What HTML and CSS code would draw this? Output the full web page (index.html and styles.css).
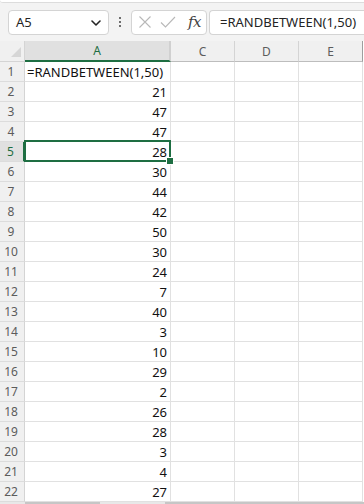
FILE: index.html
```html
<!DOCTYPE html>
<html>
<head>
<meta charset="utf-8">
<link rel="stylesheet" href="styles.css">
</head>
<body>
<div class="app">
  <div class="ribbon-edge"></div>
  <div class="fbar">
    <div class="namebox">
      <span class="nb-text">A5</span>
      <svg class="chev" width="10" height="6" viewBox="0 0 10 6"><path d="M1 1 L5 5 L9 1" fill="none" stroke="#242424" stroke-width="1.6" stroke-linecap="round" stroke-linejoin="round"/></svg>
    </div>
    <div class="dots"><span></span><span></span><span></span></div>
    <div class="fxbox">
      <svg class="ic" width="14" height="14" viewBox="0 0 14 14"><path d="M1.5 1.5 L12.5 12.5 M12.5 1.5 L1.5 12.5" stroke="#b8b8b8" stroke-width="1.1" fill="none"/></svg>
      <svg class="ic" width="16" height="14" viewBox="0 0 16 14"><path d="M1 7.5 L5.5 12 L15 2" stroke="#b8b8b8" stroke-width="1.1" fill="none"/></svg>
      <span class="fx">fx</span>
    </div>
    <div class="finput">=RANDBETWEEN(1,50)</div>
  </div>
  <div class="grid">
    <div class="corner"><svg width="10" height="10" viewBox="0 0 10 10"><path d="M10 0 L10 10 L0 10 Z" fill="#d6d6d6"/></svg></div>
    <div class="ch sel">A</div>
    <div class="ch hidden-left">C</div>
    <div class="ch">D</div>
    <div class="ch last">E</div>

    <div class="rh">1</div><div class="c txt">=RANDBETWEEN(1,50)</div><div class="c hl"></div><div class="c"></div><div class="c last"></div>
    <div class="rh">2</div><div class="c">21</div><div class="c hl"></div><div class="c"></div><div class="c last"></div>
    <div class="rh">3</div><div class="c">47</div><div class="c hl"></div><div class="c"></div><div class="c last"></div>
    <div class="rh">4</div><div class="c">47</div><div class="c hl"></div><div class="c"></div><div class="c last"></div>
    <div class="rh rsel">5</div><div class="c active">28</div><div class="c hl"></div><div class="c"></div><div class="c last"></div>
    <div class="rh">6</div><div class="c">30</div><div class="c hl"></div><div class="c"></div><div class="c last"></div>
    <div class="rh">7</div><div class="c">44</div><div class="c hl"></div><div class="c"></div><div class="c last"></div>
    <div class="rh">8</div><div class="c">42</div><div class="c hl"></div><div class="c"></div><div class="c last"></div>
    <div class="rh">9</div><div class="c">50</div><div class="c hl"></div><div class="c"></div><div class="c last"></div>
    <div class="rh">10</div><div class="c">30</div><div class="c hl"></div><div class="c"></div><div class="c last"></div>
    <div class="rh">11</div><div class="c">24</div><div class="c hl"></div><div class="c"></div><div class="c last"></div>
    <div class="rh">12</div><div class="c">7</div><div class="c hl"></div><div class="c"></div><div class="c last"></div>
    <div class="rh">13</div><div class="c">40</div><div class="c hl"></div><div class="c"></div><div class="c last"></div>
    <div class="rh">14</div><div class="c">3</div><div class="c hl"></div><div class="c"></div><div class="c last"></div>
    <div class="rh">15</div><div class="c">10</div><div class="c hl"></div><div class="c"></div><div class="c last"></div>
    <div class="rh">16</div><div class="c">29</div><div class="c hl"></div><div class="c"></div><div class="c last"></div>
    <div class="rh">17</div><div class="c">2</div><div class="c hl"></div><div class="c"></div><div class="c last"></div>
    <div class="rh">18</div><div class="c">26</div><div class="c hl"></div><div class="c"></div><div class="c last"></div>
    <div class="rh">19</div><div class="c">28</div><div class="c hl"></div><div class="c"></div><div class="c last"></div>
    <div class="rh">20</div><div class="c">3</div><div class="c hl"></div><div class="c"></div><div class="c last"></div>
    <div class="rh">21</div><div class="c">4</div><div class="c hl"></div><div class="c"></div><div class="c last"></div>
    <div class="rh">22</div><div class="c">27</div><div class="c hl"></div><div class="c"></div><div class="c last"></div>
  </div>
  <div class="bottom">
    <div class="b-seg b1"></div>
    <div class="b-seg b2"></div>
    <div class="b-seg b3"></div>
  </div>
</div>
</body>
</html>
```
FILE: styles.css
```css
* { box-sizing: border-box; }
html, body { margin: 0; padding: 0; }
body {
  width: 364px;
  height: 504px;
  overflow: hidden;
  background: #f3f3f3;
  font-family: "Noto Sans", "Open Sans", sans-serif;
  color: #242424;
}
.app { display: flex; flex-direction: column; height: 504px; }

.ribbon-edge {
  height: 3px;
  background: #ffffff;
  border-bottom: 1px solid #dcdcdc;
  border-bottom-left-radius: 4px;
}

.fbar {
  height: 38px;
  display: flex;
  align-items: center;
  padding: 0 0 0 8px;
  gap: 0;
}
.namebox {
  width: 101px;
  height: 25px;
  background: #fff;
  border: 1px solid #d4d4d4;
  border-radius: 4px;
  display: flex;
  align-items: center;
  justify-content: space-between;
  padding: 0 7px 0 7px;
  font-size: 13px;
}
.chev { margin-top: 1px; }
.dots {
  width: 22px;
  display: flex;
  flex-direction: column;
  align-items: center;
  gap: 2px;
}
.dots span { width: 2px; height: 2px; background: #424242; border-radius: 1px; }
.fxbox {
  width: 76px;
  height: 25px;
  background: #fff;
  border: 1px solid #d4d4d4;
  border-radius: 4px;
  display: flex;
  align-items: center;
  padding: 0 0 0 6px;
  gap: 8px;
}
.fx {
  font-family: "DejaVu Serif", "Liberation Serif", serif;
  font-style: italic;
  font-size: 15px;
  color: #424242;
  margin-left: 4px;
  letter-spacing: -0.5px;
}
.finput {
  margin-left: 2px;
  flex: 1;
  height: 25px;
  background: #fff;
  border: 1px solid #d4d4d4;
  border-right: none;
  border-radius: 4px 0 0 4px;
  display: flex;
  align-items: center;
  padding-left: 10px;
  font-size: 13px;
  white-space: nowrap;
  overflow: hidden;
}

.grid {
  display: grid;
  grid-template-columns: 25px 146px 64px 64px 64px;
  grid-template-rows: 21px repeat(22, 20px);
  background: #fff;
}
.corner {
  background: #f0f0f0;
  border-right: 1px solid #d4d4d4;
  border-bottom: 1px solid #d4d4d4;
  display: flex;
  align-items: flex-end;
  justify-content: flex-end;
  padding: 0 3px 4px 0;
}
.ch {
  background: #f0f0f0;
  border-right: 1px solid #d4d4d4;
  border-bottom: 1px solid #bdbdbd;
  display: flex;
  align-items: center;
  justify-content: center;
  font-size: 12px;
  color: #5c5c5c;
}
.ch.sel {
  background: #e0e0e0;
  color: #1e6e42;
  border-bottom: 2px solid #1e6e42;
  border-right: 2px solid #d0d0d0;
}
.ch.last { border-right: 1px solid #9e9e9e; }
.rh {
  background: #f0f0f0;
  border-right: 1px solid #d4d4d4;
  border-bottom: 1px solid #dcdcdc;
  display: flex;
  align-items: center;
  justify-content: center;
  font-size: 12px;
  color: #5c5c5c;
  padding-right: 2px;
}
.rh.rsel {
  background: #e0e0e0;
  color: #1e6e42;
  border-right: 2px solid #1e6e42;
}
.c {
  border-right: 1px solid #e1e1e1;
  border-bottom: 1px solid #e1e1e1;
  display: flex;
  align-items: center;
  justify-content: flex-end;
  padding: 0 3px 0 2px;
  font-size: 13px;
  color: #111;
  white-space: nowrap;
}
.c.txt { justify-content: flex-start; overflow: visible; }
.c.last { border-right: 1px solid #e1e1e1; }
.c.active { position: relative; }
.c.active::before {
  content: "";
  position: absolute;
  left: -1px;
  top: -2px;
  right: -1px;
  bottom: -1px;
  border: 2px solid #1e6e42;
  pointer-events: none;
}
.c.active::after {
  content: "";
  position: absolute;
  right: -4px;
  bottom: -4px;
  width: 6px;
  height: 6px;
  background: #1e6e42;
  border: 1px solid #fff;
}

.bottom {
  flex: 1;
  display: flex;
  background: #f0f0f0;
}
.b-seg { height: 2px; }
.b1 { width: 25px; background: #e8e8e8; }
.b2 { width: 75px; background: #c6c6c6; }
.b3 { width: 65px; background: #e8e8e8; }
.bottom::after { content: ""; flex: 1; height: 2px; background: #c6c6c6; }
```
